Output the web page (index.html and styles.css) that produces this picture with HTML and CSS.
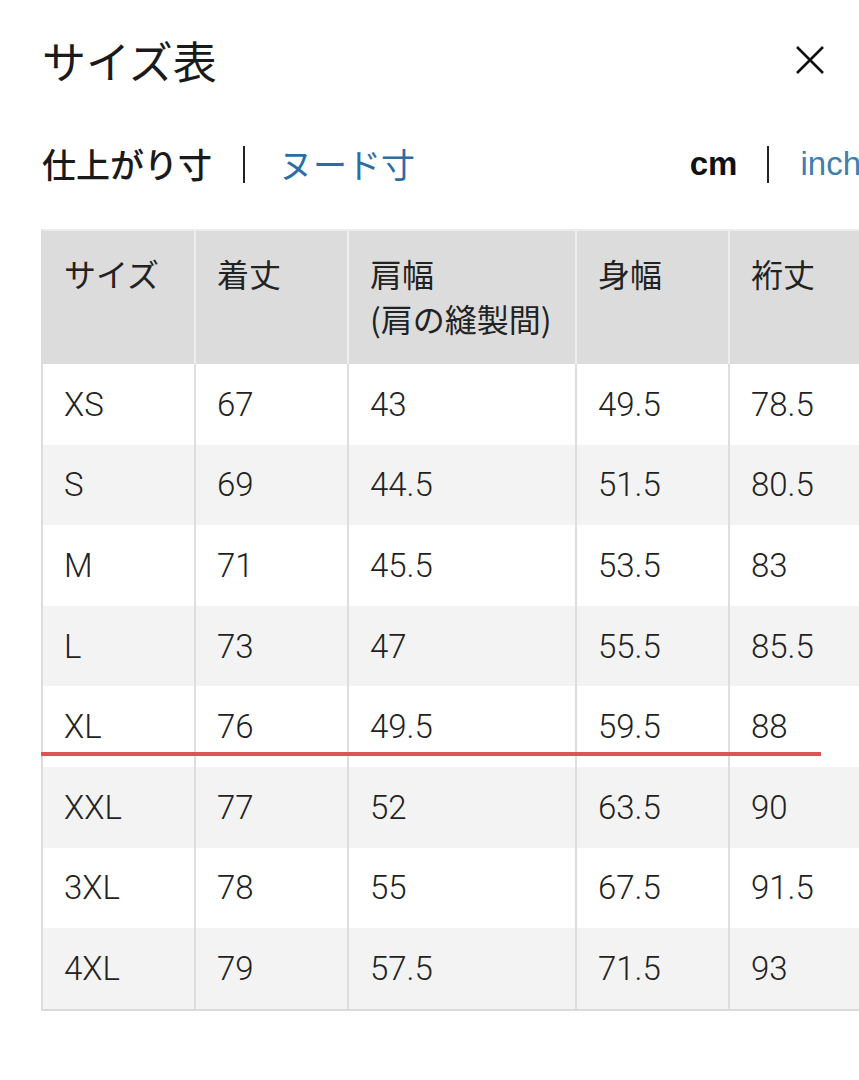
FILE: index.html
```html
<!DOCTYPE html>
<html lang="ja">
<head>
<meta charset="utf-8">
<title>サイズ表</title>
<link rel="stylesheet" href="styles.css">
</head>
<body>
<div class="page">
  <header class="title-bar">
    <h1 class="title">サイズ表</h1>
    <button class="close" aria-label="閉じる">
      <svg width="30" height="30" viewBox="0 0 30 30"><path d="M2 2 L28 28 M28 2 L2 28" stroke="#111" stroke-width="2.6" fill="none"/></svg>
    </button>
  </header>
  <div class="tabs">
    <div class="tab-group">
      <span class="tab active">仕上がり寸</span>
      <span class="sep"></span>
      <span class="tab link">ヌード寸</span>
    </div>
    <div class="unit-group">
      <span class="unit active">cm</span>
      <span class="sep"></span>
      <span class="unit link">inch</span>
    </div>
  </div>
  <div class="table-wrap">
    <table class="size-table">
      <colgroup>
        <col class="c-narrow"><col class="c-narrow"><col class="c-wide"><col class="c-narrow"><col class="c-narrow">
      </colgroup>
      <thead>
        <tr><th>サイズ</th><th>着丈</th><th>肩幅<br>(肩の縫製間)</th><th>身幅</th><th>裄丈</th></tr>
      </thead>
      <tbody>
        <tr><td>XS</td><td>67</td><td>43</td><td>49.5</td><td>78.5</td></tr>
        <tr><td>S</td><td>69</td><td>44.5</td><td>51.5</td><td>80.5</td></tr>
        <tr><td>M</td><td>71</td><td>45.5</td><td>53.5</td><td>83</td></tr>
        <tr><td>L</td><td>73</td><td>47</td><td>55.5</td><td>85.5</td></tr>
        <tr class="marked"><td>XL</td><td>76</td><td>49.5</td><td>59.5</td><td>88</td></tr>
        <tr><td>XXL</td><td>77</td><td>52</td><td>63.5</td><td>90</td></tr>
        <tr><td>3XL</td><td>78</td><td>55</td><td>67.5</td><td>91.5</td></tr>
        <tr><td>4XL</td><td>79</td><td>57.5</td><td>71.5</td><td>93</td></tr>
      </tbody>
    </table>
    <div class="highlight-line"></div>
  </div>
</div>
</body>
</html>
```
FILE: styles.css
```css
html, body {
  margin: 0;
  padding: 0;
  background: #fff;
  overflow: hidden;
}
body {
  font-family: Roboto, "Noto Sans CJK JP", sans-serif;
  color: #222;
}
.page {
  width: 859px;
  padding-left: 41px;
  box-sizing: border-box;
}
.title-bar {
  display: flex;
  align-items: center;
  justify-content: space-between;
  padding-top: 30px;
  height: 60px;
  padding-right: 34px;
}
.title {
  margin: 0 0 0 1px;
  font-family: "Noto Sans CJK JP", sans-serif;
  font-weight: 400;
  font-size: 44px;
  line-height: 60px;
  color: #1a1a1a;
}
.close {
  border: 0;
  background: none;
  padding: 0;
  width: 30px;
  height: 30px;
  display: flex;
}
.tabs {
  margin-top: 49px;
  height: 50px;
  display: flex;
  align-items: center;
  justify-content: space-between;
  white-space: nowrap;
}
.tab-group, .unit-group {
  display: flex;
  align-items: center;
}
.unit-group {
  margin-right: -2px;
}
.tab {
  font-family: "Noto Sans CJK JP", sans-serif;
  font-size: 34px;
  line-height: 50px;
  margin-left: 1px;
}
.tab.active {
  color: #1a1a1a;
  font-weight: 500;
}
.tab.link {
  color: #2b6ea6;
}
.sep {
  width: 2px;
  height: 37px;
  background: #222;
}
.tab-group .sep {
  margin: 0 33px 0 31px;
}
.unit {
  font-family: "Liberation Sans", Arial, sans-serif;
  font-size: 33px;
  line-height: 50px;
}
.unit.active {
  font-weight: 700;
  color: #111;
}
.unit.link {
  color: #3d7fb0;
  font-weight: 400;
}
.unit-group .sep {
  margin: 0 31px 0 30px;
}
.table-wrap {
  position: relative;
  margin-top: 40px;
}
.size-table {
  border-collapse: separate;
  border-spacing: 0;
  table-layout: fixed;
  width: 842px;
  border-left: 2px solid #dcdcdc;
  border-top: 2px solid #ececec;
  border-bottom: 2px solid #dadada;
}
.c-narrow { width: 153px; }
.c-wide { width: 228px; }
.size-table th {
  background: #dcdcdc;
  text-align: left;
  vertical-align: top;
  font-family: "Noto Sans CJK JP", sans-serif;
  font-weight: 400;
  font-size: 32px;
  line-height: 45px;
  color: #222;
  padding: 20px 0 23px 21px;
  height: 133px;
  box-sizing: border-box;
  border-right: 2px solid #eeeeee;
}
.size-table td {
  height: 80.6px;
  box-sizing: border-box;
  padding: 0 0 0 21px;
  font-size: 33px;
  font-weight: 300;
  color: #222;
  vertical-align: middle;
  border-right: 2px solid #dedede;
}
.size-table tbody tr:nth-child(even) td {
  background: #f3f3f3;
}
.highlight-line {
  position: absolute;
  left: 0;
  top: 523px;
  width: 780px;
  height: 4px;
  background: #dc5555;
}
```
